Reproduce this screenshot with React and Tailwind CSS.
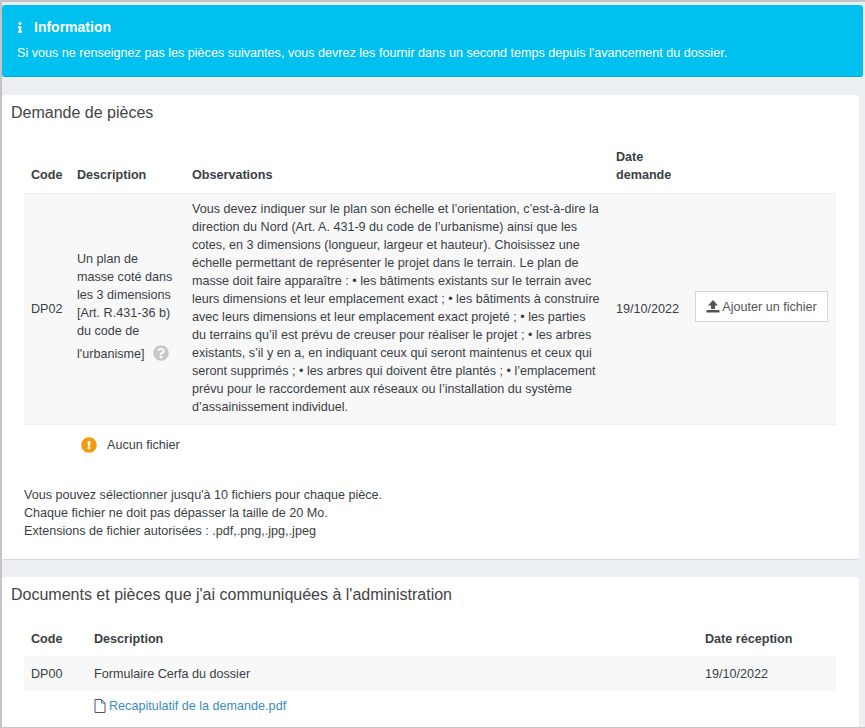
import React from 'react';
import { FaInfo, FaQuestionCircle, FaExclamationCircle } from 'react-icons/fa';

const observations = "Vous devez indiquer sur le plan son échelle et l’orientation, c’est-à-dire la direction du Nord (Art. A. 431-9 du code de l’urbanisme) ainsi que les cotes, en 3 dimensions (longueur, largeur et hauteur). Choisissez une échelle permettant de représenter le projet dans le terrain. Le plan de masse doit faire apparaître : • les bâtiments existants sur le terrain avec leurs dimensions et leur emplacement exact ; • les bâtiments à construire avec leurs dimensions et leur emplacement exact projeté ; • les parties du terrains qu’il est prévu de creuser pour réaliser le projet ; • les arbres existants, s’il y en a, en indiquant ceux qui seront maintenus et ceux qui seront supprimés ; • les arbres qui doivent être plantés ; • l’emplacement prévu pour le raccordement aux réseaux ou l’installation du système d’assainissement individuel.";

const UploadIcon = () => (
  <svg viewBox="0 0 14 14" className="w-[14px] h-[14px] mr-[2px] -mt-[2px] text-[#555]" fill="currentColor">
    <path d="M7 1 L12 6.5 H9 V10 H5 V6.5 H2 Z" />
    <rect x="0.5" y="11" width="13" height="2.5" />
  </svg>
);

const FileIcon = () => (
  <svg viewBox="0 0 12 14" className="w-[12px] h-[14px] mr-[3px]" fill="none" strokeWidth="1">
    <path d="M1 .5 H7.5 L11 4 V13.5 H1 Z" stroke="#5b4a78" />
    <path d="M7.5 .5 V4 H11" stroke="#5b6f9a" />
  </svg>
);

const App = () => {
  return (
    <div className="h-[728px] overflow-hidden bg-[#ebeef3] border-l-2 border-t-2 border-b border-[#c4c4c4] font-['Liberation_Sans',Arial,sans-serif] text-[12.6px] leading-[18px] text-[#3a3f44]">
      {/* Information banner */}
      <div className="mt-[3px] mr-[2px] h-[72px] rounded-[3px] bg-[#00c0ef] border-b border-[#00acd6] pl-[15px] pt-[12px] text-white">
        <div className="flex items-center h-[20px] text-[14px] font-bold">
          <FaInfo className="w-[8px] h-[11px] mr-[10px] -ml-[1px]" />
          <span>Information</span>
        </div>
        <p className="mt-[7px]">Si vous ne renseignez pas les pièces suivantes, vous devrez les fournir dans un second temps depuis l'avancement du dossier.</p>
      </div>

      {/* Demande de pieces */}
      <div className="mt-[18px] mr-[6px] h-[465px] rounded-[3px] bg-white border-b border-[#d2d6de] px-[9px] pt-[8px]">
        <h2 className="text-base leading-[20px] font-normal text-[#444]">Demande de pièces</h2>
        <div className="mt-[17px] ml-[13px] mr-[14px]">
          <table className="w-full table-fixed border-collapse">
            <colgroup>
              <col className="w-[46px]" />
              <col className="w-[115px]" />
              <col className="w-[424px]" />
              <col className="w-[79px]" />
              <col />
            </colgroup>
            <thead>
              <tr className="text-left align-bottom">
                <th className="px-[7px] pt-[8px] pb-[9px] font-bold">Code</th>
                <th className="px-[7px] pt-[8px] pb-[9px] font-bold">Description</th>
                <th className="px-[7px] pt-[8px] pb-[9px] font-bold">Observations</th>
                <th className="px-[7px] pt-[8px] pb-[9px] font-bold">Date demande</th>
                <th></th>
              </tr>
            </thead>
            <tbody>
              <tr className="bg-[#f8f8f9] border-t border-[#f1f1f1] align-middle">
                <td className="px-[7px] pt-[8px] pb-[9px]">DP02</td>
                <td className="px-[7px] pt-[8px] pb-[9px]">
                  Un plan de masse coté dans les 3 dimensions [Art. R.431-36 b) du code de
                  <span className="block leading-[28px] whitespace-nowrap">
                    l'urbanisme]
                    <FaQuestionCircle className="inline-block ml-[8px] w-[16px] h-[16px] text-[#c8c8c8] align-[-3px]" />
                  </span>
                </td>
                <td className="px-[7px] pt-[6px] pb-[8px]">{observations}</td>
                <td className="px-[7px] pt-[8px] pb-[9px]">19/10/2022</td>
                <td className="pt-[8px] pb-[13px] pl-[7px] pr-[8px]">
                  <button className="flex items-center justify-center w-[133px] h-[31px] bg-white border border-[#d2d6de] text-[#555]">
                    <UploadIcon />
                    Ajouter un fichier
                  </button>
                </td>
              </tr>
            </tbody>
          </table>
          <div className="flex items-center h-[40px] pl-[57px] border-t border-[#f1f1f1]">
            <FaExclamationCircle className="w-[16px] h-[16px] text-[#f39c12]" />
            <span className="ml-[10px]">Aucun fichier</span>
          </div>
        </div>
        <div className="mt-[22px] ml-[13px]">
          <p>Vous pouvez sélectionner jusqu'à 10 fichiers pour chaque pièce.</p>
          <p>Chaque fichier ne doit pas dépasser la taille de 20 Mo.</p>
          <p>Extensions de fichier autorisées : .pdf,.png,.jpg,.jpeg</p>
        </div>
      </div>

      {/* Documents communiques */}
      <div className="mt-[17px] mr-[6px] rounded-t-[3px] bg-white h-[160px] px-[9px] pt-[8px]">
        <h2 className="text-base leading-[20px] font-normal text-[#444]">Documents et pièces que j'ai communiquées à l'administration</h2>
        <div className="mt-[16px] ml-[13px] mr-[14px]">
          <table className="w-full table-fixed border-collapse">
            <colgroup>
              <col className="w-[63px]" />
              <col />
              <col className="w-[138px]" />
            </colgroup>
            <thead>
              <tr className="text-left">
                <th className="px-[7px] h-[35px] font-bold">Code</th>
                <th className="px-[7px] h-[35px] font-bold">Description</th>
                <th className="px-[7px] h-[35px] font-bold">Date réception</th>
              </tr>
            </thead>
            <tbody>
              <tr className="bg-[#f8f8f9]">
                <td className="px-[7px] h-[35px]">DP00</td>
                <td className="px-[7px] h-[35px]">Formulaire Cerfa du dossier</td>
                <td className="px-[7px] h-[35px]">19/10/2022</td>
              </tr>
              <tr>
                <td></td>
                <td className="px-[7px] h-[33px]" colSpan={2}>
                  <a href="#" className="inline-flex items-center text-[#3c8dbc]">
                    <FileIcon />
                    Recapitulatif de la demande.pdf
                  </a>
                </td>
              </tr>
            </tbody>
          </table>
        </div>
      </div>
    </div>
  );
};

export default App;
